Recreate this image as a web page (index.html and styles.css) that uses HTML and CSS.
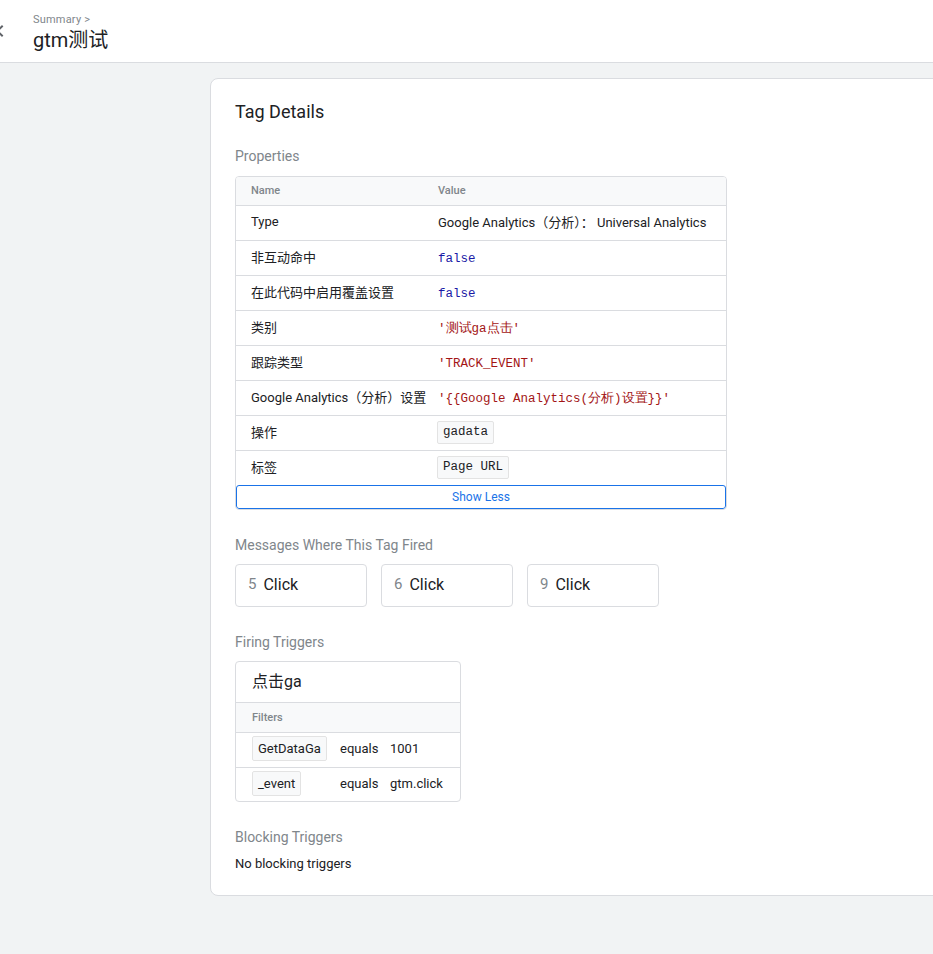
FILE: index.html
```html
<!DOCTYPE html>
<html>
<head>
<meta charset="utf-8">
<link rel="stylesheet" href="styles.css">
</head>
<body>
<header class="topbar">
  <svg class="back" width="24" height="24" viewBox="0 0 24 24"><path d="M15.4 7.4 14 6l-6 6 6 6 1.4-1.4L10.8 12z" fill="#5f6368"/></svg>
  <div class="crumbs">
    <div class="crumb">Summary &gt;</div>
    <div class="title">gtm测试</div>
  </div>
</header>
<main class="page">
  <section class="card">
    <h1 class="card-title">Tag Details</h1>

    <h2 class="sec-title">Properties</h2>
    <div class="props">
      <div class="row head"><div>Name</div><div>Value</div></div>
      <div class="row"><div>Type</div><div>Google Analytics（分析）： Universal Analytics</div></div>
      <div class="row"><div>非互动命中</div><div class="mono kw">false</div></div>
      <div class="row"><div>在此代码中启用覆盖设置</div><div class="mono kw">false</div></div>
      <div class="row"><div>类别</div><div class="mono str">'测试ga点击'</div></div>
      <div class="row"><div>跟踪类型</div><div class="mono str">'TRACK_EVENT'</div></div>
      <div class="row"><div>Google Analytics（分析）设置</div><div class="mono str">'{{Google Analytics(分析)设置}}'</div></div>
      <div class="row"><div>操作</div><div class="chipcell"><span class="chip mono">gadata</span></div></div>
      <div class="row last"><div>标签</div><div class="chipcell"><span class="chip mono">Page URL</span></div></div>
      <button class="show-less">Show Less</button>
    </div>

    <h2 class="sec-title gap">Messages Where This Tag Fired</h2>
    <div class="msgs">
      <div class="msg"><span class="num">5</span><span>Click</span></div>
      <div class="msg"><span class="num">6</span><span>Click</span></div>
      <div class="msg"><span class="num">9</span><span>Click</span></div>
    </div>

    <h2 class="sec-title gap">Firing Triggers</h2>
    <div class="trigger">
      <div class="trig-name">点击ga</div>
      <div class="filters-head">Filters</div>
      <div class="filter"><span class="fchip">GetDataGa</span><span>equals</span><span>1001</span></div>
      <div class="filter"><span class="fchip">_event</span><span>equals</span><span>gtm.click</span></div>
    </div>

    <h2 class="sec-title gap tight">Blocking Triggers</h2>
    <p class="none">No blocking triggers</p>
  </section>
</main>
</body>
</html>
```

FILE: styles.css
```css
* { box-sizing: border-box; }
html, body { margin: 0; padding: 0; }
body {
  font-family: Roboto, "Noto Sans CJK SC", sans-serif;
  color: #202124;
  background: #f1f3f4;
  overflow-x: hidden;
  min-height: 954px;
}
.topbar {
  height: 63px;
  background: #fff;
  border-bottom: 1px solid #dadce0;
  display: flex;
  align-items: center;
}
.back {
  margin-left: -12px;
  margin-right: 21px;
}
.crumbs { display: flex; flex-direction: column; margin-top: 4px; }
.crumb { font-size: 11px; line-height: 14px; color: #80868b; letter-spacing: 0.2px; }
.title { font-size: 20px; line-height: 26px; color: #202124; margin-top: 0; }
.page {
  padding: 15px 0 60px 210px;
}
.card {
  width: 780px;
  background: #fff;
  border: 1px solid #dadce0;
  border-radius: 8px;
  padding: 21px 24px 21px 24px;
}
.card-title {
  margin: 0;
  font-size: 18px;
  line-height: 24px;
  font-weight: 400;
}
.sec-title {
  margin: 22px 0 10px;
  font-size: 14px;
  line-height: 20px;
  font-weight: 400;
  color: #80868b;
}
.sec-title.gap { margin: 25px 0 9px; }
.sec-title.tight { margin-bottom: 7px; }
.props {
  width: 492px;
  border: 1px solid #dadce0;
  border-radius: 4px;
  overflow: hidden;
}
.row {
  display: grid;
  grid-template-columns: 187px 1fr;
  height: 35px;
  align-items: center;
  border-bottom: 1px solid #dadce0;
  font-size: 13px;
}
.row > div { padding-left: 15px; padding-bottom: 3px; white-space: nowrap; }
.row > div.mono { padding-bottom: 0; padding-top: 1px; }
.row > div.chipcell { padding-bottom: 1px; }
.row.head {
  height: 29px;
  background: #f8f9fa;
  font-size: 11px;
  font-weight: 500;
  color: #80868b;
}
.row.head > div { padding-bottom: 2px; }
.row.last { border-bottom: none; height: 34px; }
.mono { font-family: "Liberation Mono", monospace; font-size: 12.5px; }
.kw { color: #1a1aa6; }
.str { color: #a31515; }
.chip {
  display: inline-block;
  background: #f8f9fa;
  border: 1px solid #e3e3e3;
  border-radius: 2px;
  padding: 4px 5px;
  line-height: 13px;
  color: #202124;
  margin-left: -1px;
}
.show-less {
  display: block;
  width: 100%;
  height: 24px;
  margin: 0;
  background: #fff;
  border: 1px solid #1a73e8;
  border-radius: 3px;
  color: #1a73e8;
  font-family: Roboto, sans-serif;
  font-size: 12px;
  padding: 0;
  cursor: pointer;
}
.msgs { display: flex; gap: 14.5px; }
.msg {
  width: 131.5px;
  height: 43px;
  border: 1px solid #dadce0;
  border-radius: 4px;
  display: flex;
  align-items: center;
  padding-left: 12px;
  padding-bottom: 3px;
  font-size: 16px;
  gap: 7px;
}
.num { color: #80868b; font-size: 15px; }
.trigger {
  width: 226px;
  border: 1px solid #dadce0;
  border-radius: 4px;
  overflow: hidden;
}
.trig-name {
  height: 41px;
  display: flex;
  align-items: center;
  padding-left: 16px;
  padding-bottom: 4px;
  font-size: 16px;
  border-bottom: 1px solid #dadce0;
}
.filters-head {
  height: 30px;
  background: #f8f9fa;
  border-bottom: 1px solid #dadce0;
  display: flex;
  align-items: center;
  padding-left: 16px;
  padding-bottom: 1px;
  font-size: 11px;
  font-weight: 500;
  color: #80868b;
}
.filter {
  display: grid;
  grid-template-columns: 88px 50px auto;
  align-items: center;
  height: 35px;
  padding-left: 16px;
  padding-bottom: 3px;
  font-size: 13px;
  border-bottom: 1px solid #dadce0;
}
.filter:last-child { border-bottom: none; height: 33px; }
.fchip {
  justify-self: start;
  background: #f8f9fa;
  border: 1px solid #e3e3e3;
  border-radius: 2px;
  padding: 4px 5px;
  line-height: 15px;
}
.none {
  margin: 0;
  font-size: 13px;
  line-height: 20px;
}
```
